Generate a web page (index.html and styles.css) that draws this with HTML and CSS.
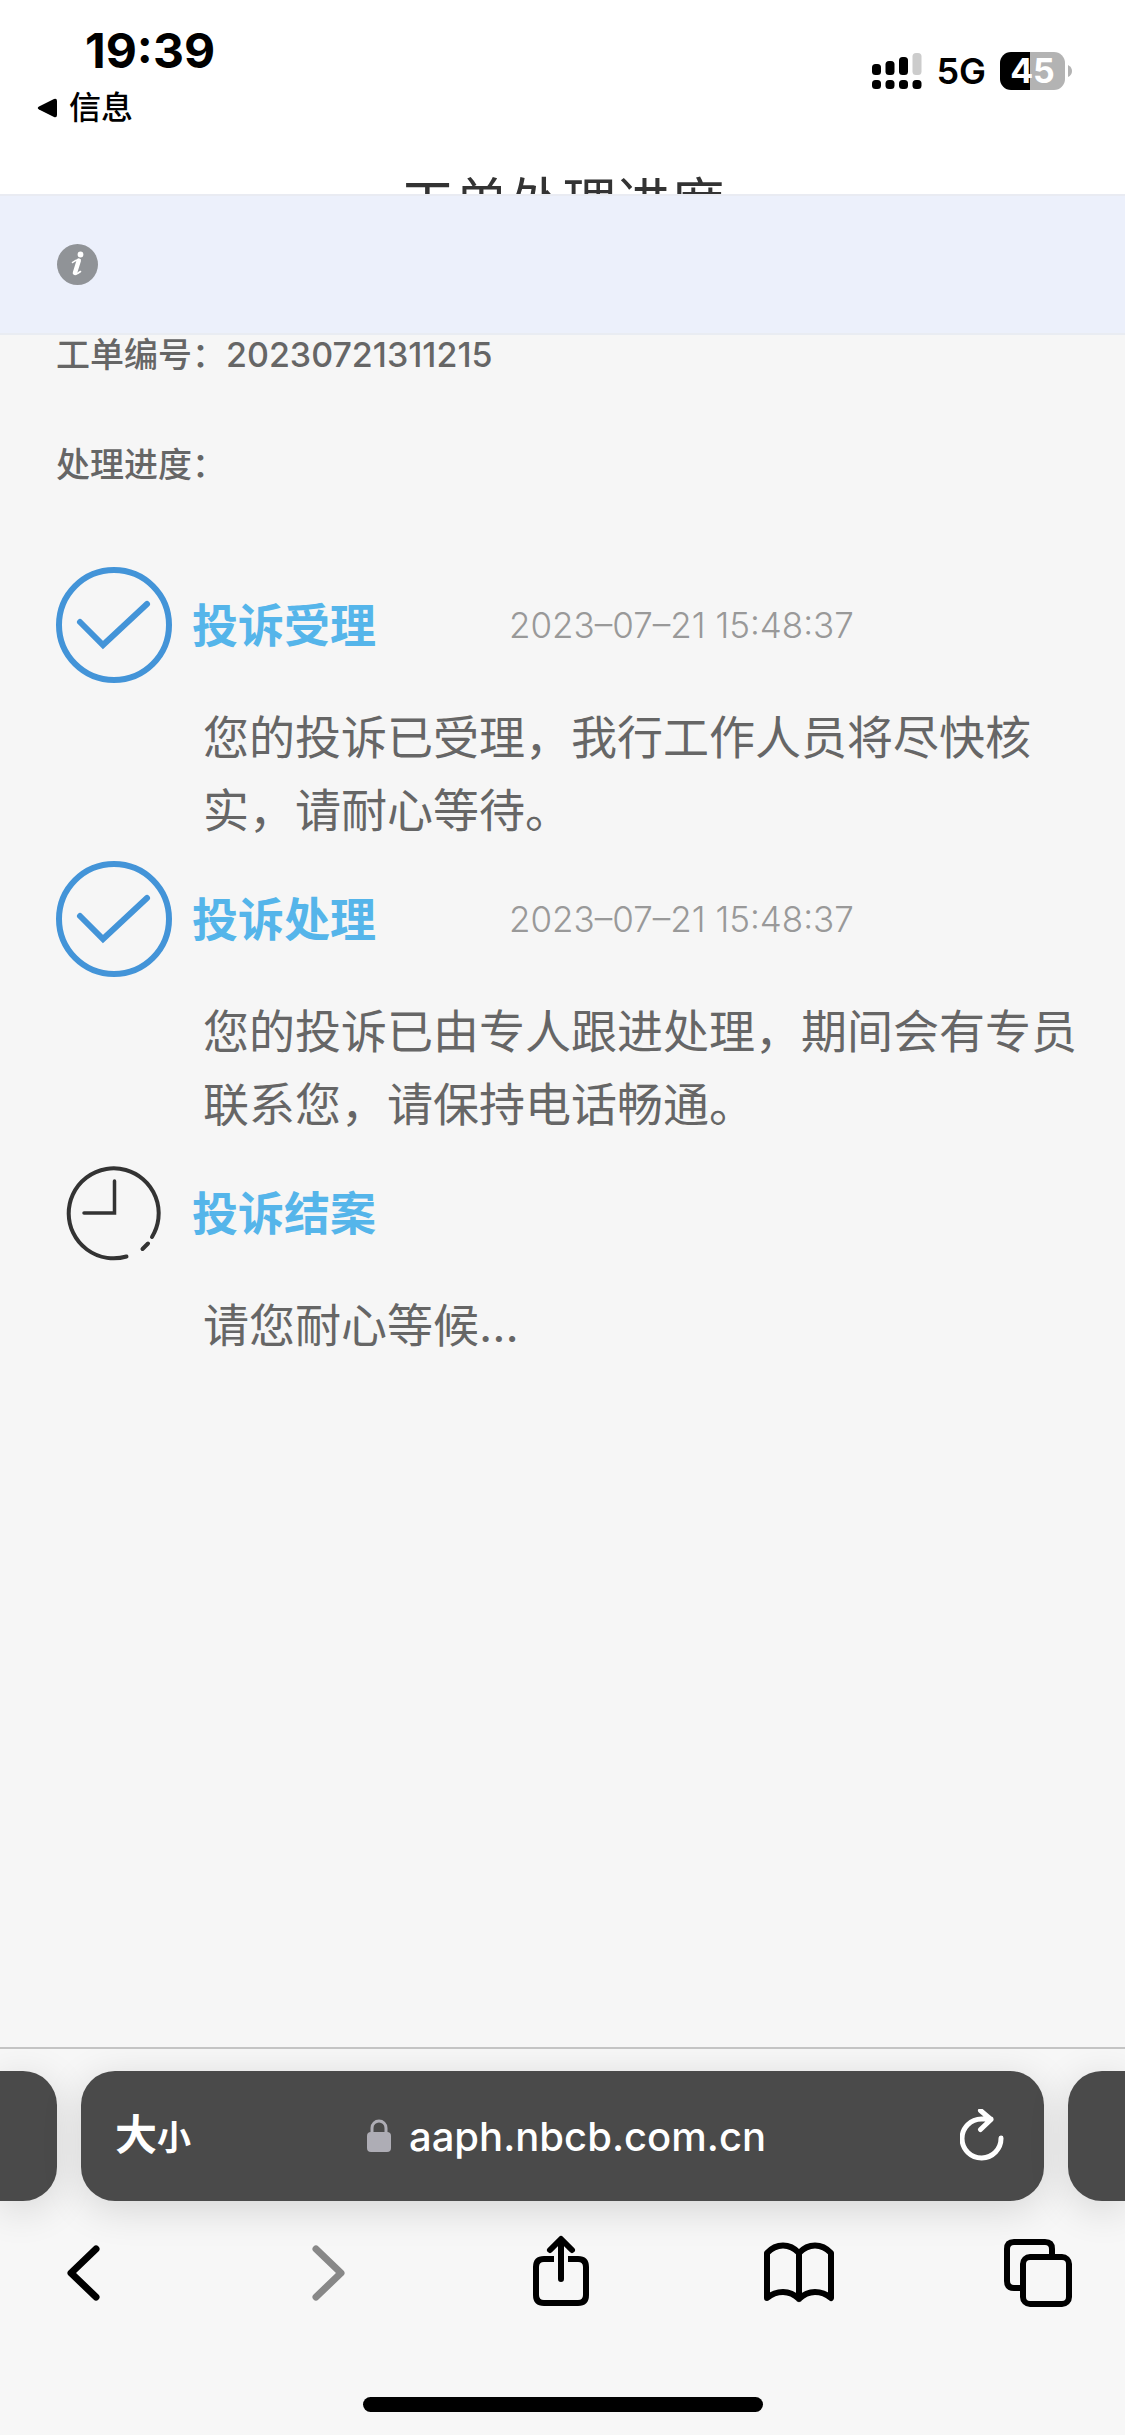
FILE: index.html
```html
<!DOCTYPE html>
<html lang="zh-CN">
<head>
    <meta charset="UTF-8">
    <meta name="viewport" content="width=device-width, initial-scale=1">
    <title>工单处理进度</title>
    <link rel="stylesheet" href="styles.css">
</head>
<body>
    <div class="status-bar">
        <div class="status-left">
            <div class="clock">19:39</div>
            <a class="back-app" href="#">
                <svg width="21" height="22" viewBox="0 0 21 22"><path d="M2 9.4 17 2Q20 1 20 4V18Q20 21 17 20L2 12.6Q-.5 11 2 9.4Z"/></svg>
                <span>信息</span>
            </a>
        </div>
        <div class="status-right">
            <svg width="50" height="37" viewBox="0 0 50 37">
                <rect x="0" y="11" width="9" height="11" rx="3.5"/>
                <rect x="13.500" y="8" width="9" height="14" rx="3.5"/>
                <rect x="27" y="4" width="9" height="18" rx="3.5"/>
                <rect x="40.500" y="0" width="9" height="22" rx="3.5" fill="#ccc"/>
                <rect x="0" y="27" width="9" height="9" rx="3.5"/>
                <rect x="13.500" y="27" width="9" height="9" rx="3.5"/>
                <rect x="27" y="27" width="9" height="9" rx="3.5"/>
                <rect x="40.500" y="27" width="9" height="9" rx="3.5"/>
            </svg>
            <span class="network">5G</span>
            <div class="battery">
                <div class="battery-level">45</div>
                <svg width="4" height="12" viewBox="0 0 4 12"><path d="M0 0Q4 2 4 6T0 12Z" fill="#b3b3b3"/></svg>
            </div>
        </div>
    </div>

    <header class="page-header">
        <h1>工单处理进度</h1>
    </header>

    <div class="notice">
        <svg width="41" height="41" viewBox="0 0 41 41">
            <circle cx="20.500" cy="20.500" r="20.500" fill="#909397"/>
            <circle cx="23.500" cy="10.500" r="2.900" fill="#fff"/>
            <path d="M15.500 18.500Q19 15.500 22.500 15.800L18.500 28.500Q17.800 31.800 23.500 27.500" fill="none" stroke="#fff" stroke-width="1.600" stroke-linecap="round"/>
            <path d="M21.800 16.500 17.900 29" stroke="#fff" stroke-width="4.400" stroke-linecap="round"/>
        </svg>
    </div>

    <main class="content">
        <p class="field">工单编号：20230721311215</p>
        <p class="field">处理进度：</p>

        <ul class="steps">
            <li class="step">
                <div class="step-head">
                    <svg class="step-icon" viewBox="0 0 116 116">
                        <circle cx="58" cy="58" r="55" stroke="#4394d8" stroke-width="6"/>
                        <path d="M24 55 47 78 91 37" stroke="#4394d8" stroke-width="6"/>
                    </svg>
                    <h2>投诉受理</h2>
                    <time>2023–07–21 15:48:37</time>
                </div>
                <p>您的投诉已受理，我行工作人员将尽快核实，请耐心等待。</p>
            </li>
            <li class="step">
                <div class="step-head">
                    <svg class="step-icon" viewBox="0 0 116 116">
                        <circle cx="58" cy="58" r="55" stroke="#4394d8" stroke-width="6"/>
                        <path d="M24 55 47 78 91 37" stroke="#4394d8" stroke-width="6"/>
                    </svg>
                    <h2>投诉处理</h2>
                    <time>2023–07–21 15:48:37</time>
                </div>
                <p>您的投诉已由专人跟进处理，期间会有专员联系您，请保持电话畅通。</p>
            </li>
            <li class="step">
                <div class="step-head">
                    <svg class="step-icon" viewBox="0 0 116 116">
                        <path d="M96 82A45 45 0 1 0 70.500 101.500M92 88.500 86.500 94" stroke="#333" stroke-width="4"/>
                        <path d="M58.500 26V58H28" stroke="#333" stroke-width="3.500"/>
                    </svg>
                    <h2>投诉结案</h2>
                </div>
                <p>请您耐心等候...</p>
            </li>
        </ul>
    </main>

    <footer class="browser">
        <div class="tabs">
            <div class="tab-edge left"></div>
            <div class="address-bar">
                <button class="text-size" aria-label="大小">大<small>小</small></button>
                <button class="url">
                    <svg width="24" height="34" viewBox="0 0 24 34">
                        <path d="M5 15V9A7 7 0 0 1 19 9V15" fill="none" stroke="#aeadb5" stroke-width="3"/>
                        <rect x="0" y="13" width="24" height="20" rx="4" fill="#aeadb5"/>
                    </svg>
                    <span>aaph.nbcb.com.cn</span>
                </button>
                <button class="reload" aria-label="刷新">
                    <svg width="44" height="54" viewBox="0 0 44 54">
                        <path d="M41 29A19.500 19.500 0 1 1 21.500 10H31M20.500 1.500 31 10.500 20.500 20.500" fill="none" stroke="#fff" stroke-width="5" stroke-linecap="round" stroke-linejoin="round"/>
                    </svg>
                </button>
            </div>
            <div class="tab-edge right"></div>
        </div>

        <nav class="toolbar">
            <button aria-label="后退">
                <svg viewBox="0 0 80 80"><path d="M53 16 28 40 53 64" stroke-width="7"/></svg>
            </button>
            <button aria-label="前进" disabled>
                <svg viewBox="0 0 80 80"><path d="M34 16 59 40 34 64" stroke-width="7"/></svg>
            </button>
            <button aria-label="分享">
                <svg viewBox="0 0 80 80"><path d="M40 46V7M29 17 40 6 51 17"/><path d="M33 26H23Q15 26 15 34V62Q15 70 23 70H57Q65 70 65 62V34Q65 26 57 26H47" stroke-linecap="butt"/></svg>
            </button>
            <button aria-label="书签">
                <svg viewBox="0 0 80 80"><path d="M40 20Q33 12.500 24 12.500T8 20V65Q15 59 24 59T40 66Q47 59 56 59T72 65V20Q65 12.500 56 12.500T40 20V66"/></svg>
            </button>
            <button aria-label="标签页">
                <svg viewBox="0 0 80 80"><rect x="25" y="24" width="46" height="47" rx="7"/><path d="M24 55H16Q9 55 9 48V16Q9 9 16 9H47Q54 9 54 16V23"/></svg>
            </button>
        </nav>
        <div class="home-indicator"></div>
    </footer>
</body>
</html>
```
FILE: styles.css
```css
* {
    box-sizing: border-box;
}

body {
    margin: 0;
    min-height: 100vh;
    display: flex;
    flex-direction: column;
    background: #f6f6f6;
    font-family: Inter, "Noto Sans CJK SC", sans-serif;
    color: #666;
}

svg {
    display: block;
    flex-shrink: 0;
}

button {
    padding: 0;
    background: none;
    border: none;
    color: inherit;
    font-family: inherit;
    cursor: pointer;
}

.status-bar {
    display: flex;
    justify-content: space-between;
    height: 160px;
    padding: 24px 53px 0 37px;
    background: #fff;
    color: #000;
}

.clock {
    padding-left: 48px;
    font-size: 48px;
    line-height: 54px;
    font-weight: 700;
}

.back-app {
    display: flex;
    align-items: center;
    gap: 11px;
    margin-top: 10px;
    color: #000;
    font-size: 32px;
    line-height: 40px;
    font-weight: 500;
    text-decoration: none;
}

.status-right {
    display: flex;
    align-items: center;
    height: 36px;
    margin-top: 29px;
}

.network {
    margin: 0 14px;
    font-size: 36px;
    font-weight: 600;
}

.battery {
    display: flex;
    align-items: center;
    gap: 3px;
}

.battery-level {
    width: 65px;
    height: 38px;
    border-radius: 11px;
    background: linear-gradient(to right, #000 46%, #b3b3b3 46%);
    color: #fff;
    font-size: 34px;
    line-height: 38px;
    font-weight: 700;
    text-align: center;
}

/* 标题下半部分被提示条遮住 */
.page-header {
    height: 34px;
    overflow: hidden;
    background: #fff;
}

.page-header h1 {
    margin: 0;
    padding-top: 8px;
    color: #333;
    font-size: 54px;
    line-height: 72px;
    font-weight: 400;
    text-align: center;
}

.notice {
    display: flex;
    align-items: center;
    height: 141px;
    padding: 0 57px;
    background: #ecf0fb;
    border-top: 2px solid #e9ebf2;
    border-bottom: 2px solid #e9ecf2;
}

.content {
    flex: 1;
    padding: 0 28px 40px 56px;
}

.field {
    margin: 0 0 70px;
    font-size: 34px;
    line-height: 40px;
    font-weight: 500;
}

.steps {
    margin: 0;
    padding: 12px 0 0;
    list-style: none;
}

.step {
    margin-bottom: 14px;
}

.step-head {
    display: flex;
    align-items: center;
}

.step-icon {
    width: 116px;
    height: 116px;
    fill: none;
    stroke-linecap: round;
}

.step h2 {
    width: 317px;
    margin: 0 0 0 20px;
    color: #55b5ea;
    font-size: 46px;
    line-height: 64px;
    font-weight: 700;
}

.step time {
    color: #999;
    font-size: 35px;
    font-weight: 300;
}

.step p {
    margin: 18px 0 0;
    padding-left: 147px;
    font-size: 46px;
    line-height: 73px;
}

.browser {
    border-top: 2px solid #c4c4c4;
    background: #f7f7f7;
    overflow: hidden;
}

.tabs {
    display: flex;
    gap: 24px;
    padding-top: 22px;
}

.tab-edge,
.address-bar {
    height: 130px;
    background: #4a4a4a;
    box-shadow: 0 8px 40px rgba(0, 0, 0, 0.14);
}

.tab-edge {
    width: 57px;
}

.tab-edge.left {
    border-radius: 0 34px 34px 0;
}

.tab-edge.right {
    border-radius: 34px 0 0 34px;
}

.address-bar {
    flex: 1;
    display: flex;
    align-items: center;
    padding: 0 40px 0 34px;
    border-radius: 34px;
    color: #fff;
}

.text-size {
    font-size: 42px;
    line-height: 48px;
    font-weight: 700;
}

.text-size small {
    font-size: 34px;
}

.url {
    flex: 1;
    display: flex;
    align-items: center;
    justify-content: center;
    gap: 18px;
    padding-right: 18px;
    font-size: 40px;
    font-weight: 500;
}

.toolbar {
    display: flex;
    justify-content: space-between;
    padding: 32px 47px 0 43px;
}

.toolbar button {
    width: 80px;
    height: 80px;
}

.toolbar svg {
    fill: none;
    stroke: #000;
    stroke-width: 6;
    stroke-linecap: round;
    stroke-linejoin: round;
}

.toolbar button:disabled svg {
    stroke: #888;
}

.home-indicator {
    width: 400px;
    height: 15px;
    margin: 84px auto 23px;
    border-radius: 8px;
    background: #000;
}
```
